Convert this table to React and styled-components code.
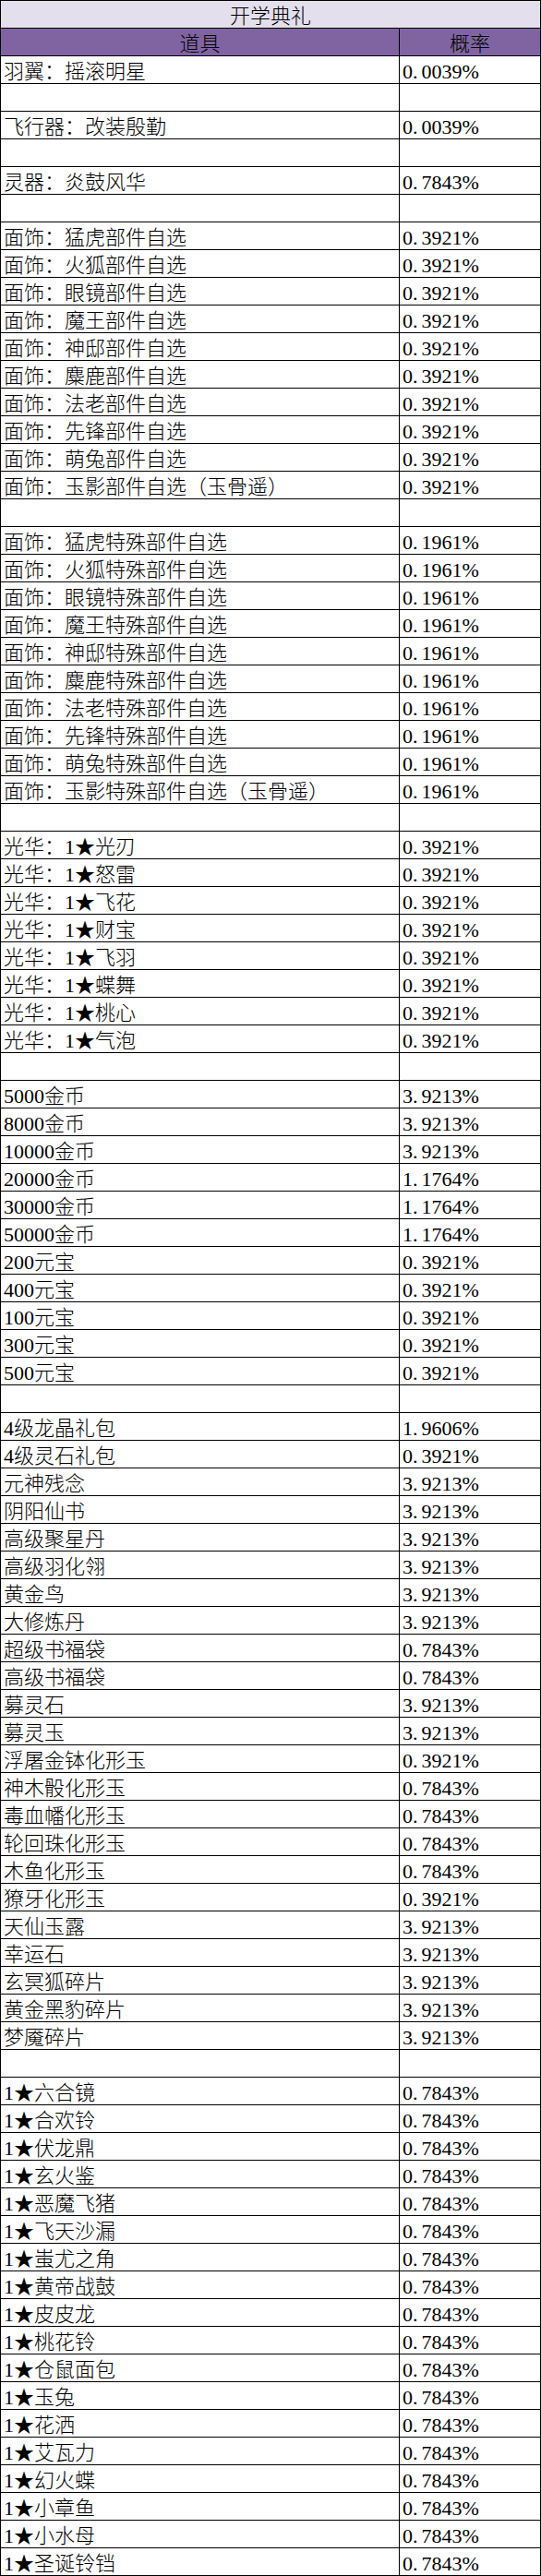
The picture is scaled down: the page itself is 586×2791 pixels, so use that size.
import styled, { createGlobalStyle } from 'styled-components';

const GlobalStyle = createGlobalStyle`
  html, body {
    margin: 0;
    padding: 0;
    background: #ffffff;
  }
`;

const Table = styled.div`
  width: 586px;
  box-sizing: border-box;
  border-top: 1px solid #000;
  border-left: 1px solid #000;
  font-family: 'Liberation Serif', 'Noto Sans CJK SC', serif;
  font-weight: 300;
  color: #000;
`;

const Row = styled.div`
  display: grid;
  grid-template-columns: ${(props) => (props.full ? '1fr' : '432px 1fr')};
  height: 30px;
  background: ${(props) => props.bg || '#fff'};
`;

const Cell = styled.div`
  box-sizing: border-box;
  border-right: 1px solid #000;
  border-bottom: 1px solid #000;
  display: flex;
  align-items: flex-end;
  justify-content: ${(props) => (props.center ? 'center' : 'flex-start')};
  padding: 0 3px 0 3px;
  font-size: 22px;
  line-height: 25px;
  white-space: nowrap;
  overflow: hidden;
`;

const Dot = styled.span`
  margin-right: 4px;
`;

const masks = ['猛虎', '火狐', '眼镜', '魔王', '神邸', '麋鹿', '法老', '先锋', '萌兔', '玉影'];

const groups = [
  [['羽翼：摇滚明星', '0.0039%']],
  [['飞行器：改装殷勤', '0.0039%']],
  [['灵器：炎鼓风华', '0.7843%']],
  masks.map((n) => [`面饰：${n}部件自选${n === '玉影' ? '（玉骨遥）' : ''}`, '0.3921%']),
  masks.map((n) => [`面饰：${n}特殊部件自选${n === '玉影' ? '（玉骨遥）' : ''}`, '0.1961%']),
  ['光刃', '怒雷', '飞花', '财宝', '飞羽', '蝶舞', '桃心', '气泡'].map((n) => [`光华：1★${n}`, '0.3921%']),
  [
    ['5000金币', '3.9213%'],
    ['8000金币', '3.9213%'],
    ['10000金币', '3.9213%'],
    ['20000金币', '1.1764%'],
    ['30000金币', '1.1764%'],
    ['50000金币', '1.1764%'],
    ['200元宝', '0.3921%'],
    ['400元宝', '0.3921%'],
    ['100元宝', '0.3921%'],
    ['300元宝', '0.3921%'],
    ['500元宝', '0.3921%'],
  ],
  [
    ['4级龙晶礼包', '1.9606%'],
    ['4级灵石礼包', '0.3921%'],
    ['元神残念', '3.9213%'],
    ['阴阳仙书', '3.9213%'],
    ['高级聚星丹', '3.9213%'],
    ['高级羽化翎', '3.9213%'],
    ['黄金鸟', '3.9213%'],
    ['大修炼丹', '3.9213%'],
    ['超级书福袋', '0.7843%'],
    ['高级书福袋', '0.7843%'],
    ['募灵石', '3.9213%'],
    ['募灵玉', '3.9213%'],
    ['浮屠金钵化形玉', '0.3921%'],
    ['神木骰化形玉', '0.7843%'],
    ['毒血幡化形玉', '0.7843%'],
    ['轮回珠化形玉', '0.7843%'],
    ['木鱼化形玉', '0.7843%'],
    ['獠牙化形玉', '0.3921%'],
    ['天仙玉露', '3.9213%'],
    ['幸运石', '3.9213%'],
    ['玄冥狐碎片', '3.9213%'],
    ['黄金黑豹碎片', '3.9213%'],
    ['梦魇碎片', '3.9213%'],
  ],
  [
    '六合镜', '合欢铃', '伏龙鼎', '玄火鉴', '恶魔飞猪', '飞天沙漏', '蚩尤之角', '黄帝战鼓', '皮皮龙',
    '桃花铃', '仓鼠面包', '玉兔', '花洒', '艾瓦力', '幻火蝶', '小章鱼', '小水母', '圣诞铃铛',
  ].map((n) => [`1★${n}`, '0.7843%']),
];

const Rate = ({ value }) => {
  const [a, b] = value.split('.');
  return (
    <>
      {a}
      <Dot>.</Dot>
      {b}
    </>
  );
};

const App = () => {
  const rows = [];
  groups.forEach((g, gi) => {
    if (gi > 0) rows.push(null);
    g.forEach((r) => rows.push(r));
  });

  return (
    <>
      <GlobalStyle />
      <Table>
        <Row full bg="#e4dfec">
          <Cell center>开学典礼</Cell>
        </Row>
        <Row bg="#8064a2">
          <Cell center>道具</Cell>
          <Cell center>概率</Cell>
        </Row>
        {rows.map((r, i) => (
          <Row key={i}>
            <Cell>{r ? r[0] : ''}</Cell>
            <Cell>{r ? <Rate value={r[1]} /> : ''}</Cell>
          </Row>
        ))}
      </Table>
    </>
  );
};

export default App;
